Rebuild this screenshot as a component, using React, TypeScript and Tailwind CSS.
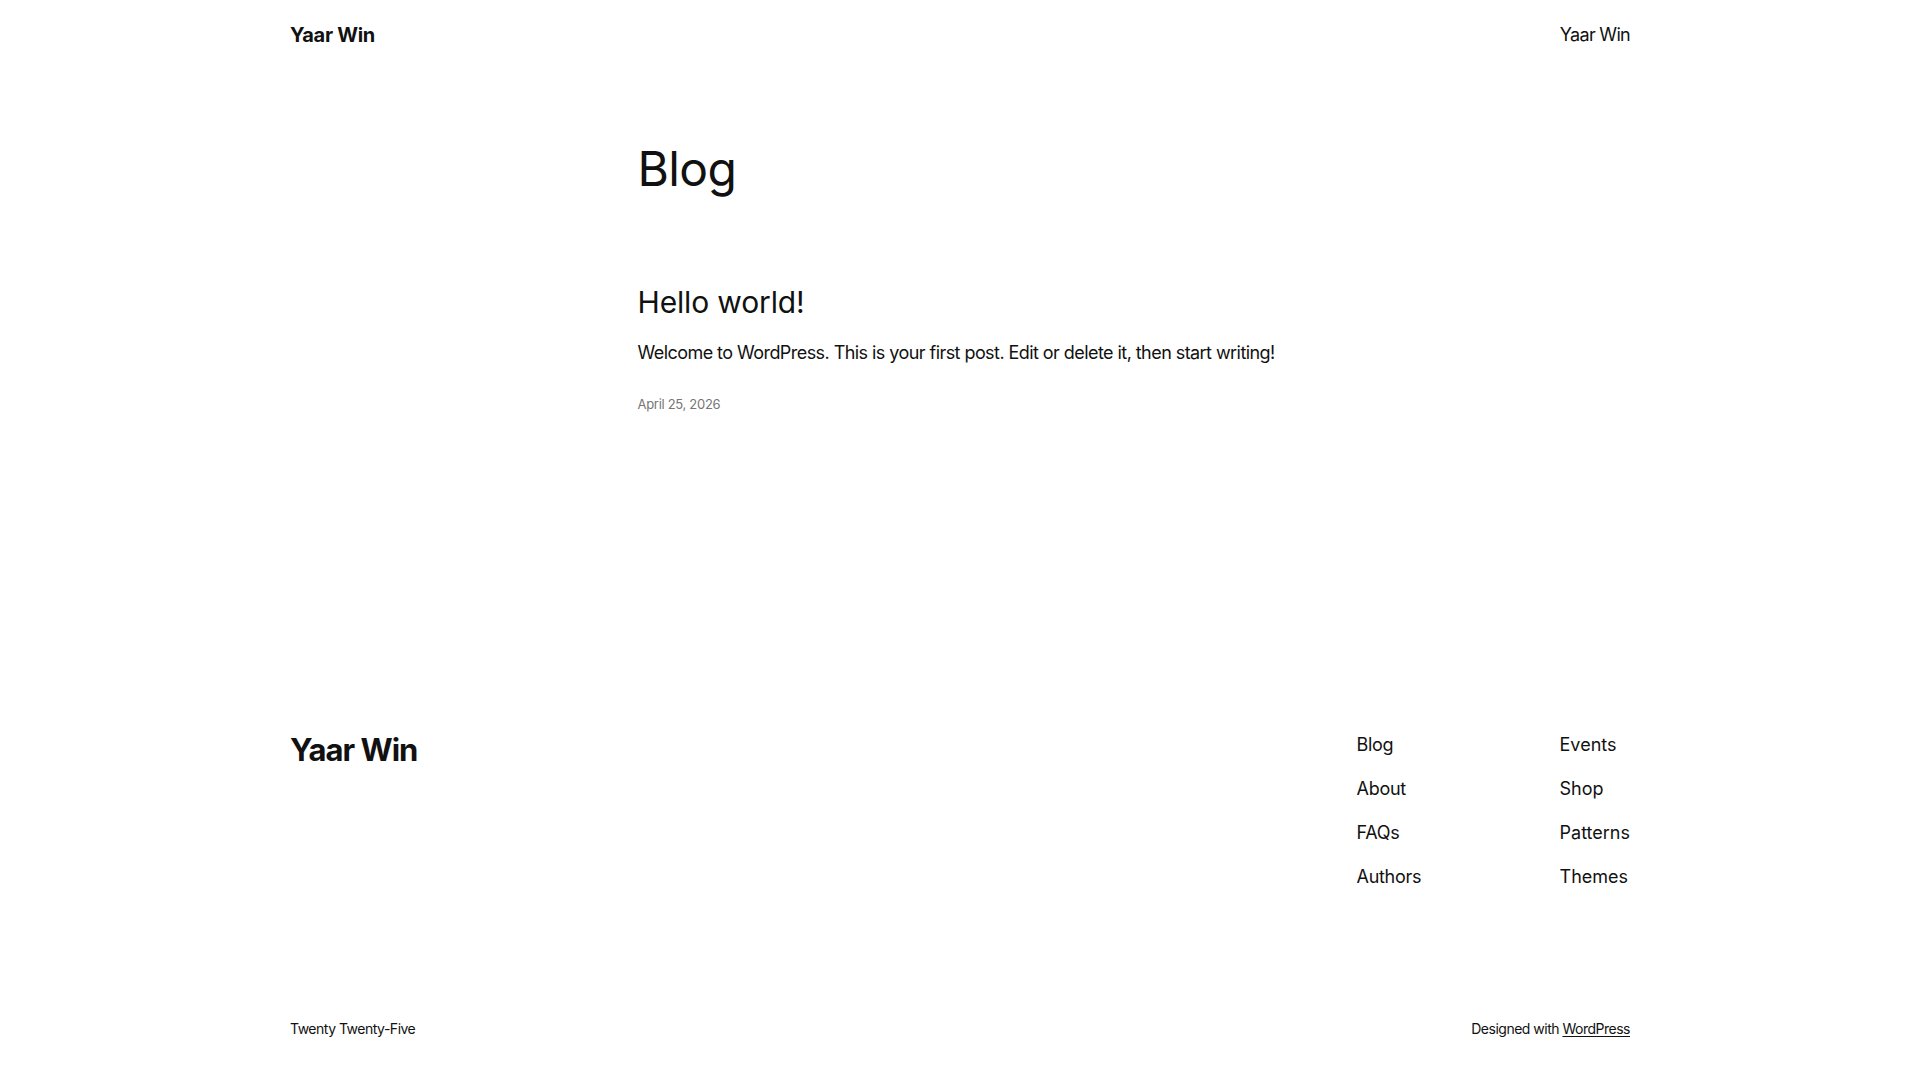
import React from 'react'

const font = { fontFamily: 'Inter, "Noto Sans", sans-serif' }

const navLeft = ['Blog', 'About', 'FAQs', 'Authors']
const navRight = ['Events', 'Shop', 'Patterns', 'Themes']

const Header: React.FC = () => (
  <header className="h-[70px] w-[1340px] mx-auto flex items-center justify-between">
    <a href="#" className="text-[20px] leading-[28px] font-bold text-[#111111] tracking-[-0.3px]">
      Yaar Win
    </a>
    <nav>
      <a href="#" className="text-[18px] leading-[28px] text-[#111111] tracking-[-0.7px]">
        Yaar Win
      </a>
    </nav>
  </header>
)

const Main: React.FC = () => (
  <main className="flex-1 w-[645px] mx-auto pt-[70px]">
    <h1 className="text-[48px] leading-[1.2] font-normal text-[#111111] tracking-[-0.6px]">Blog</h1>
    <article className="mt-[86px]">
      <h2 className="text-[30px] leading-[36px] font-normal text-[#111111] tracking-[-0.15px]">
        <a href="#">Hello world!</a>
      </h2>
      <p className="mt-[19px] text-[18px] leading-[28.8px] text-[#111111] tracking-[-0.56px] whitespace-nowrap">
        Welcome to WordPress. This is your first post. Edit or delete it, then start writing!
      </p>
      <div className="mt-[27px] text-[13px] leading-[20px] text-[#767676] tracking-[-0.3px]">April 25, 2026</div>
    </article>
  </main>
)

const Footer: React.FC = () => (
  <footer className="w-[1340px] mx-auto pb-[41px]">
    <div className="flex justify-between items-start">
      <a href="#" className="text-[31px] leading-[38px] font-bold text-[#111111] tracking-[-1px]">
        Yaar Win
      </a>
      <div className="flex">
        <ul className="w-[203px] flex flex-col gap-4">
          {navLeft.map((item) => (
            <li key={item} className="text-[18px] leading-[28px] text-[#111111] tracking-[-0.3px]">
              <a href="#">{item}</a>
            </li>
          ))}
        </ul>
        <ul className="flex flex-col gap-4">
          {navRight.map((item) => (
            <li key={item} className="text-[18px] leading-[28px] text-[#111111]">
              <a href="#">{item}</a>
            </li>
          ))}
        </ul>
      </div>
    </div>
    <div className="mt-[128px] flex justify-between text-[14px] leading-[20px] text-[#111111] tracking-[-0.5px]">
      <span>Twenty Twenty-Five</span>
      <span>
        Designed with{' '}
        <a href="#" className="underline underline-offset-2">
          WordPress
        </a>
      </span>
    </div>
  </footer>
)

export default function App() {
  return (
    <div className="min-h-screen bg-white flex flex-col" style={font}>
      <Header />
      <Main />
      <Footer />
    </div>
  )
}
